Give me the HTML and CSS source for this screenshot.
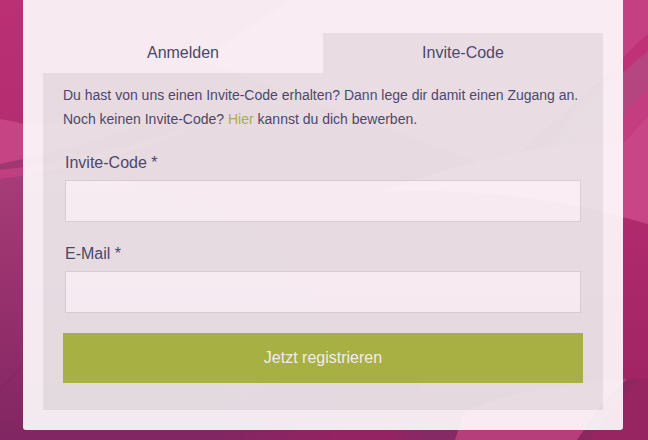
FILE: index.html
```html
<!DOCTYPE html>
<html lang="de">
<head>
  <meta charset="utf-8">
  <meta name="viewport" content="width=device-width, initial-scale=1">
  <title>Invite-Code</title>
  <link rel="stylesheet" href="styles.css">
</head>
<body>
  <svg class="backdrop" viewBox="0 0 648 440" preserveAspectRatio="none" aria-hidden="true">
    <defs>
      <linearGradient id="base" x1="0" y1="0" x2="0" y2="1">
        <stop offset="0" stop-color="#bb3074"/>
        <stop offset=".5" stop-color="#b02a6e"/>
        <stop offset=".85" stop-color="#a12565"/>
        <stop offset="1" stop-color="#932261"/>
      </linearGradient>
      <linearGradient id="dusk" x1="0" y1="0" x2="0" y2="1">
        <stop offset="0" stop-color="#a63d78"/>
        <stop offset=".35" stop-color="#9b336f"/>
        <stop offset="1" stop-color="#812662"/>
      </linearGradient>
      <linearGradient id="glow" x1="0" y1="0" x2="1" y2="0">
        <stop offset="0" stop-color="#942363" stop-opacity="0"/>
        <stop offset=".6" stop-color="#942363"/>
        <stop offset="1" stop-color="#942363"/>
      </linearGradient>
      <linearGradient id="shade" x1="0" y1="0" x2="1" y2="0">
        <stop offset="0" stop-color="#862a65" stop-opacity="0"/>
        <stop offset=".5" stop-color="#862a65"/>
      </linearGradient>
      <linearGradient id="veil" x1="0" y1="0" x2="0" y2="1">
        <stop offset="0" stop-color="#b4467f"/>
        <stop offset="1" stop-color="#b84480"/>
      </linearGradient>
    </defs>
    <rect width="648" height="440" fill="url(#base)"/>
    <path d="M0 178Q130 160 270 230L400 440H0Z" fill="url(#dusk)"/>
    <rect x="220" y="380" width="200" height="60" fill="url(#glow)"/>
    <path d="M0 162L23 157L140 115L60 150L0 173Z" fill="#9f3770"/>
    <path d="M0 119Q15 121 30 126L170 115Q90 145 0 164Z" fill="#c64484"/>
    <path d="M0 170Q90 160 200 125Q110 165 0 179Z" fill="#c03f80"/>
    <path d="M0 388L23 362L50 340L23 368L0 392Z" fill="#87265f" opacity=".5"/>
    <path d="M290 0H648V37Q635 47 623 60L500 170L200 60Z" fill="#c44083"/>
    <path d="M648 34Q636 43 623 58L540 150L623 74L648 52Z" fill="#bf3277"/>
    <path d="M648 51Q634 62 623 73L520 170L623 116L648 88Z" fill="url(#veil)"/>
    <path d="M648 88Q634 103 623 116L560 150L648 142Z" fill="#c43d80"/>
    <path d="M648 116L628 139L623 142Q520 140 380 192Q520 185 648 224Z" fill="#c84686"/>
    <path d="M648 379H620L560 440H648Z" fill="#962562"/>
    <path d="M390 424H458L455 440H390Z" fill="url(#shade)"/>
    <path d="M455 440L464 412Q520 386 627 379L600 406L577 440Z" fill="#b53f7b"/>
    <path d="M638 379H628L577 440H588Z" fill="#8c2860"/>
  </svg>

  <main class="page">
    <section class="card">
      <div class="tabs" role="tablist">
        <button class="tab" id="tab-login" type="button" role="tab" aria-selected="false">Anmelden</button>
        <button class="tab tab-active" id="tab-invite" type="button" role="tab" aria-selected="true" aria-controls="panel-invite">Invite-Code</button>
      </div>
      <div class="panel" id="panel-invite" role="tabpanel" aria-labelledby="tab-invite">
        <p class="intro">Du hast von uns einen Invite-Code erhalten? Dann lege dir damit einen Zugang an. Noch keinen Invite-Code? <a class="link" href="#">Hier</a> kannst du dich bewerben.</p>
        <form class="form">
          <div class="field">
            <label class="label" for="code">Invite-Code *</label>
            <input class="input" id="code" name="code" type="text" required>
          </div>
          <div class="field">
            <label class="label" for="email">E-Mail *</label>
            <input class="input" id="email" name="email" type="email" required>
          </div>
          <button class="submit" type="submit">Jetzt registrieren</button>
        </form>
      </div>
    </section>
  </main>
</body>
</html>
```

FILE: styles.css
```css
* {
  box-sizing: border-box;
}

body {
  margin: 0;
  background: #932261;
  color: #404b6b;
  font-family: "Liberation Sans", Arial, sans-serif;
  font-size: 16px;
  line-height: 24px;
}

button,
input {
  font: inherit;
  color: inherit;
}

.backdrop {
  position: fixed;
  inset: 0;
  z-index: -1;
  width: 100%;
  height: 100%;
}

.page {
  padding: 0 25px 10px 23px;
}

.card {
  max-width: 600px;
  margin: 0 auto;
  padding: 33px 20px 20px;
  background: #fff;
  border-radius: 0 0 3px 3px;
  opacity: .9;
}

.tabs {
  display: grid;
  grid-template-columns: 1fr 1fr;
}

.tab {
  padding: 8px;
  border: 0;
  background: transparent;
  cursor: pointer;
}

.tab-active {
  background: #eee;
}

.panel {
  padding: 10px 20px 27px;
  background: #eee;
}

.intro {
  margin: 0 0 20px;
  font-size: 14px;
}

.link {
  color: #a9bf40;
  text-decoration: none;
}

.field {
  display: flex;
  flex-direction: column;
  gap: 5px;
  margin: 0 2px 20px;
}

.input {
  width: 100%;
  height: 42px;
  padding: 8px;
  border: 1px solid #ddd;
  border-radius: 0;
  background: #fff;
}

.submit {
  display: block;
  width: 100%;
  padding: 13px;
  border: 0;
  background: #a9bf40;
  color: #fff;
  cursor: pointer;
}
```
